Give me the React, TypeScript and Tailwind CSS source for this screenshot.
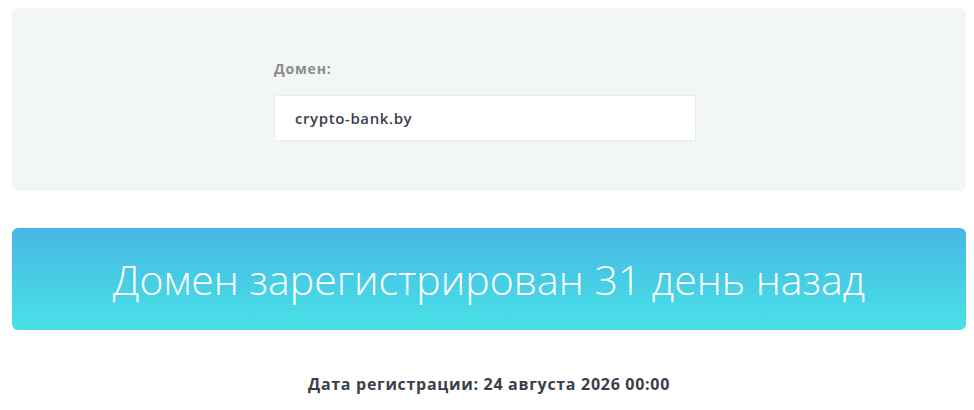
export default function App() {
  return (
    <div className="w-[974px] h-[410px] bg-white pl-3 pr-2 pt-2" style={{ fontFamily: '"Open Sans", "Noto Sans", sans-serif' }}>
      <div className="h-[183px] rounded-md bg-[#f3f6f7] pl-[262px] pt-[51px]">
        <div className="text-[14px] font-bold leading-[20px] tracking-[0.8px] text-[#8c8c8c]">Домен:</div>
        <div className="mt-[16px] flex h-[46px] w-[422px] items-center border border-[#ebeeef] bg-white px-[20px] text-[15px] font-semibold tracking-[0.6px] text-[#3b3f4c]">
          crypto-bank.by
        </div>
      </div>
      <div className="mt-[37px] flex h-[102px] items-center justify-center rounded-md bg-gradient-to-b from-[#47b7e4] to-[#47e2e6]">
        <span className="text-[41px] font-light leading-none text-white">Домен зарегистрирован 31 день назад</span>
      </div>
      <div className="mt-[42px] text-center text-[16px] font-bold tracking-[0.7px] text-[#3b3f4c]">
        Дата регистрации: 24 августа 2026 00:00
      </div>
    </div>
  );
}
